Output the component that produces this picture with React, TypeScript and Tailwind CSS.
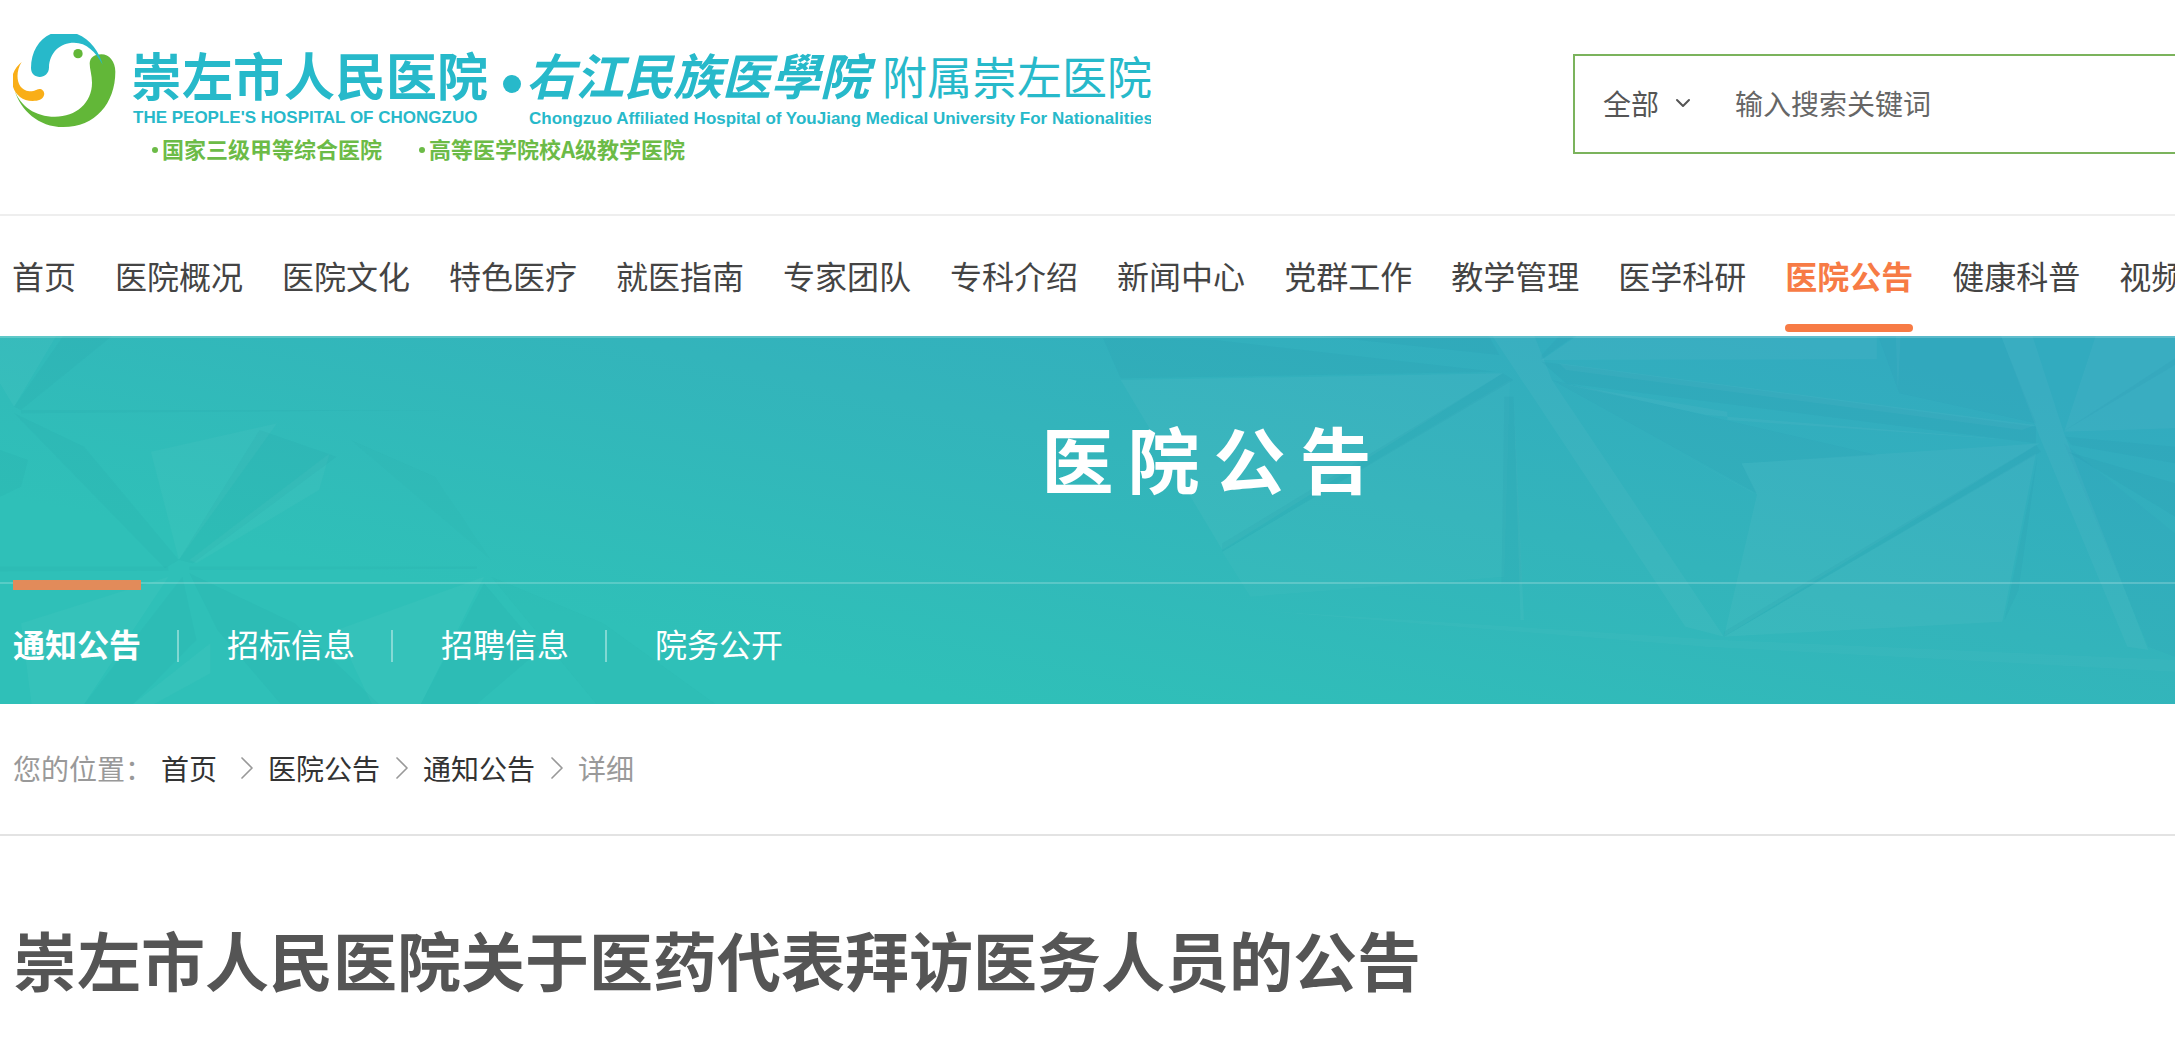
import { ChevronDown, ChevronRight } from "lucide-react";
import { Fragment } from "react";

const navItems = [
  "首页",
  "医院概况",
  "医院文化",
  "特色医疗",
  "就医指南",
  "专家团队",
  "专科介绍",
  "新闻中心",
  "党群工作",
  "教学管理",
  "医学科研",
  "医院公告",
  "健康科普",
  "视频中心",
];

const tabs = ["通知公告", "招标信息", "招聘信息", "院务公开"];

const crumbs = ["首页", "医院公告", "通知公告"];

const Logo = () => (
  <svg
    width="1138"
    height="130"
    viewBox="0 0 1138 130"
    role="img"
    aria-label="崇左市人民医院"
    className="shrink-0"
  >
    <svg x="0" y="0" width="104" height="94" viewBox="39 42 312 282">
      <path
        fill="#62b738"
        d="M44 212C62 258 105 290 165 290C228 290 276 248 276 188C276 165 269 148 269 130C270 112 284 103 304 103C328 103 346 125 346 155C346 250 285 321 190 321C115 321 62 270 44 212Z"
      />
      <path
        fill="#27b9ca"
        d="M308 134C296 85 252 34 190 34C135 34 93 80 93 144C93 180 147 180 147 142C148 98 180 68 222 68C260 68 286 95 308 134Z"
      />
      <path
        fill="#f9ae17"
        d="M65 126C44 158 48 210 88 214C104 215 108 208 118 207C128 207 135 216 132 226C128 240 115 243 98 243C60 243 36 214 36 180C36 158 50 138 65 126Z"
      />
      <circle cx="234" cy="101" r="14" fill="#62b738" />
    </svg>
    <g fill="#27b9ca" className="font-['Noto_Sans_CJK_SC',sans-serif]">
      <text x="118" y="62" fontSize="51" fontWeight="700">崇左市人民医院</text>
      <circle cx="499" cy="50" r="9" />
      <text x="513" y="61" fontSize="49" fontWeight="700" fontStyle="italic">右江民族医學院</text>
      <text x="869" y="61" fontSize="45">附属崇左医院</text>
    </g>
    <g fill="#27b9ca" className="font-['Liberation_Sans',sans-serif]">
      <text x="120" y="89" fontSize="17" fontWeight="700">THE PEOPLE'S HOSPITAL OF CHONGZUO</text>
      <text x="516" y="90" fontSize="17" fontWeight="700">
        Chongzuo Affiliated Hospital of YouJiang Medical University For Nationalities
      </text>
    </g>
    <g fill="#6cbb47" fontSize="22" fontWeight="700" className="font-['Noto_Sans_CJK_SC',sans-serif]">
      <circle cx="142" cy="116" r="3" />
      <text x="149" y="124">国家三级甲等综合医院</text>
      <circle cx="409" cy="116" r="3" />
      <text x="416" y="124">高等医学院校A级教学医院</text>
    </g>
  </svg>
);

const BannerPattern = () => (
  <svg
    className="absolute inset-0 h-full w-full"
    viewBox="0 0 2175 368"
    preserveAspectRatio="none"
    aria-hidden="true"
  >
    {/* left flowers */}
    <g transform="translate(0 -6) scale(.7015 .3333)">
      <g fill="#fff" fillOpacity=".03">
        <path d="M215 365L395 280L255 690Z" />
        <path d="M30 880L240 740L120 1122H45Z" />
        <path d="M480 900L690 740L600 1122H530Z" />
        <path d="M0 18H80L20 230L0 160Z" />
        <path d="M270 690L470 370L455 480L280 700Z" />
        <path d="M190 1122L300 940V1030L220 1122Z" />
      </g>
      <g fill="#1d7f86" fillOpacity=".05">
        <path d="M20 230L90 18H160L30 240Z" />
        <path d="M20 250L120 350L255 690L235 715Z" />
        <path d="M255 690L370 300L480 380L275 700Z" />
        <path d="M270 730L420 880L540 1122H400L310 900Z" />
        <path d="M260 740L120 1122H190L280 930Z" />
        <path d="M0 710L240 710V722L0 724Z" />
        <path d="M270 710L680 710V716L270 720Z" />
        <path d="M30 240L640 240L30 250Z" />
        <path d="M700 740L860 880L1020 1122H850Z" fillOpacity=".03" />
        <path d="M500 330L620 440L700 690Z" fillOpacity=".03" />
        <path d="M690 760L600 1122H680L770 960Z" />
        <path d="M0 360L40 390L30 470L0 500Z" />
      </g>
    </g>
    {/* right facets */}
    <g transform="translate(1075 -6) scale(.7015 .3333)">
      <g fill="#fff" fillOpacity=".035">
        <path d="M65 150L610 130L210 660Z" />
        <path d="M620 150L612 740L250 800L210 665Z" fillOpacity=".025" />
        <path d="M665 90L715 18H1143V88Z" />
        <path d="M595 18H655L680 150L925 920L870 890Z" />
        <path d="M950 400L1375 340L925 920L972 495Z" />
        <path d="M1370 370L1322 875L925 920Z" />
        <path d="M1320 18H1365L1410 310L1530 960L1500 950L1375 320Z" />
        <path d="M1410 305L1455 18H1568V295Z" />
        <path d="M690 100L1370 285L1350 300L700 120Z" />
        <path d="M690 160L930 245V270L1370 335L900 255Z" />
        <path d="M250 840L920 930L1568 990V1025L900 950Z" fillOpacity=".025" />
        <path d="M1170 18H1177L1173 190Z" />
        <path d="M625 180L640 870H635Z" />
        <path d="M690 175L972 495L965 485Z" />
      </g>
      <g fill="#126f92" fillOpacity=".06">
        <path d="M40 25L200 30L600 125L65 145Z" />
        <path d="M350 18H590L605 75Z" />
        <path d="M665 95L1370 290V340L700 160Z" />
        <path d="M680 150L1143 375L950 400L972 490Z" fillOpacity=".04" />
        <path d="M1145 18H1320L1370 280L1175 190Z" fillOpacity=".04" />
        <path d="M610 130L625 150L210 665V640Z" />
        <path d="M665 75L690 18H712L665 88Z" />
        <path d="M1370 345L1377 365L925 920V905Z" />
        <path d="M1408 305L1568 85V105Z" />
        <path d="M1412 320L1568 350V400L1420 345Z" />
        <path d="M1415 365L1568 560V460Z" />
        <path d="M612 200H625L637 760H608Z" />
        <path d="M1372 380L1345 780L1325 870Z" />
        <path d="M1410 340L1568 610V980L1530 950Z" fillOpacity=".03" />
      </g>
    </g>
  </svg>
);

const App = () => {
  return (
    <div className="min-h-screen overflow-x-hidden bg-white font-['Noto_Sans_CJK_SC',sans-serif] text-[#444]">
      <header className="flex items-start justify-between border-b-2 border-[#eee] pt-[34px] pb-[50px] pl-[13px]">
        <a href="#">
          <Logo />
        </a>
        <form className="mt-5 flex h-[100px] w-[602px] shrink-0 items-center border-y-2 border-l-2 border-[#7bb35c] pb-0.5 pl-7 text-[28px] text-[#555]">
          <select aria-label="搜索范围" className="w-[68px] appearance-none bg-transparent outline-none">
            <option>全部</option>
          </select>
          <ChevronDown className="size-6 shrink-0" strokeWidth={2} />
          <input
            type="text"
            aria-label="搜索关键词"
            placeholder="输入搜索关键词"
            className="ml-10 min-w-0 flex-1 outline-none placeholder:text-[#666]"
          />
        </form>
      </header>

      <nav className="overflow-hidden">
        <ul className="flex gap-[39px] pl-3 text-[32px] leading-[118px] whitespace-nowrap">
          {navItems.map((item) => (
            <li key={item}>
              <a
                href="#"
                className={
                  item === "医院公告"
                    ? "relative block pb-0.5 font-bold text-[#f77b45] after:absolute after:inset-x-0 after:bottom-1 after:h-2 after:rounded-full after:bg-[#f77b45]"
                    : "block pb-0.5"
                }
              >
                {item}
              </a>
            </li>
          ))}
        </ul>
      </nav>

      <section className="relative bg-[linear-gradient(12deg,#2fc0b8_25%,#33b4bb_60%,#32abbf_90%)] text-white">
        <BannerPattern />
        <div className="relative border-t-2 border-white/20">
          <h2 className="pt-[67px] pb-[73px] pl-[252px] text-center text-[72px] leading-[104px] font-bold tracking-[14px]">
            医院公告
          </h2>
          <ul className="flex items-center border-t-2 border-white/20 pb-0.5 pl-[13px] text-[32px] leading-[118px]">
            {tabs.map((tab, i) => (
              <Fragment key={tab}>
                {i > 0 && <li aria-hidden="true" className="mt-1.5 mr-12 ml-9 h-8 w-0.5 bg-white/40" />}
                <li className="relative">
                  {i === 0 && <span className="absolute inset-x-0 -top-1 h-2.5 bg-[#e28b5a]" />}
                  <a href="#" className={i === 0 ? "block font-bold" : "block"}>
                    {tab}
                  </a>
                </li>
              </Fragment>
            ))}
          </ul>
        </div>
      </section>

      <div className="flex items-center border-b-2 border-[#e3e3e3] pb-0.5 pl-[13px] text-[28px] leading-[128px] text-[#999]">
        <span className="mr-2">您的位置：</span>
        {crumbs.map((crumb, i) => (
          <Fragment key={crumb}>
            <a href="#" className="text-[#333]">
              {crumb}
            </a>
            <ChevronRight
              className={i === 0 ? "mr-px ml-2.5 size-10" : "mr-px ml-0.5 size-10"}
              strokeWidth={1}
            />
          </Fragment>
        ))}
        <span>详细</span>
      </div>

      <h1 className="pt-[76px] pl-[13px] text-[64px] leading-[92px] font-bold whitespace-nowrap text-[#555]">
        崇左市人民医院关于医药代表拜访医务人员的公告
      </h1>
    </div>
  );
};

export default App;
